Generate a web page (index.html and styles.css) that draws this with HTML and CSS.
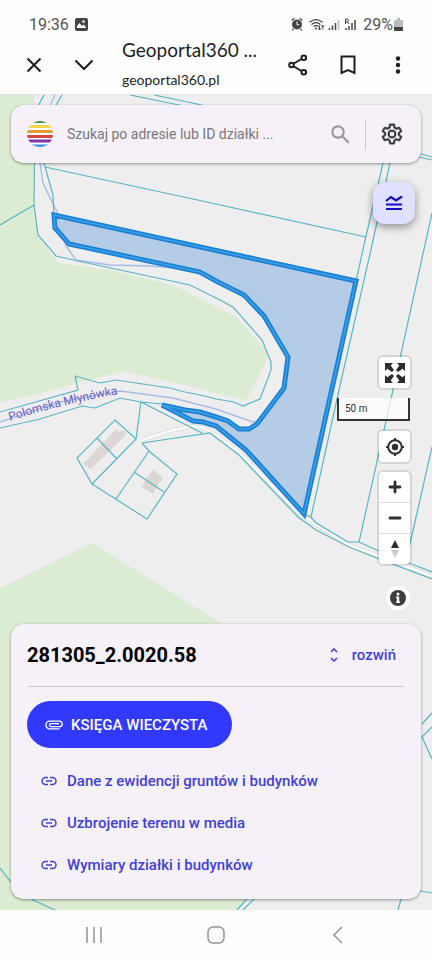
FILE: index.html
```html
<!DOCTYPE html>
<html lang="pl">
<head>
<meta charset="utf-8">
<meta name="viewport" content="width=device-width, initial-scale=1">
<title>Geoportal360</title>
<link rel="stylesheet" href="styles.css">
</head>
<body>
<header class="top">
  <div class="status">
    <span class="clock">19:36</span>
    <svg class="pic" width="13" height="13" viewBox="0 0 13 13"><rect width="13" height="13" rx="2" fill="#444"/><path d="M2 10V8l2.500-3 2.500 3 1.500-1.500L11 9v1z" fill="#fff"/><circle cx="8.500" cy="3.500" r="1.200" fill="#fff"/></svg>
    <svg class="signals" width="67" height="16" viewBox="0 0 67 16" fill="none" stroke="#444">
      <circle cx="6" cy="8.500" r="5" fill="#444" stroke="none"/><path d="M.7 4.500 3.300 2.300M11.300 4.500 8.700 2.300M2.500 13 1.300 14.300M9.500 13l1.200 1.300" stroke-width="1.400"/><path d="M6 5.500v3.300h2.500" stroke="#fff"/>
      <path d="M18.500 6.200q6.500-5 13 0M20.500 8.400q4.500-3.600 9 0M22.500 10.600q2.500-2 5 0" stroke-width="1.300"/><circle cx="25" cy="12.500" r="1" fill="#444" stroke="none"/><path d="M28.500 9.500v4.300m-1.500-1.500 1.500 1.700 1.400-1.700M31.800 13.500V9.200m-1.300 1.500 1.300-1.500 1.300 1.500"/>
      <path d="M38.500 12v2M41.500 9.500V14M44.500 7v7" stroke-width="1.500"/><path d="M47.500 4v10" stroke="#bbb" stroke-width="1.500"/>
      <path d="M54.500 8V3h2.200q1.500 1.300 0 2.700h-2M56 5.700 58 8"/><path d="M55 12v2M58 10v4M61 7v7M64 4v10" stroke-width="1.500"/>
    </svg>
    <span class="percent">29%</span>
    <svg width="9" height="13" viewBox="0 0 9 13"><path d="M3 0h3v2h2q1 0 1 1v9q0 1-1 1H1q-1 0-1-1V3q0-1 1-1h2z" fill="#bbb"/><path d="M0 9h9v3q0 1-1 1H1q-1 0-1-1z" fill="#444"/></svg>
  </div>
  <div class="appbar">
    <button class="bar-btn" aria-label="Zamknij"><svg width="16" height="16" viewBox="0 0 16 16"><path d="M1.500 1.500l13 13M14.500 1.500l-13 13"/></svg></button>
    <button class="bar-btn" aria-label="Zwiń"><svg width="20" height="12" viewBox="0 0 20 12"><path d="M1.500 1.500 10 10l8.500-8.500"/></svg></button>
    <div class="page"><h1>Geoportal360 ...</h1><p>geoportal360.pl</p></div>
    <button class="bar-btn" aria-label="Udostępnij"><svg width="20" height="22" viewBox="0 0 20 22"><path d="M5 10 13.500 5M5 12l8.500 5"/><circle cx="3.500" cy="11" r="2.300"/><circle cx="15.800" cy="3.700" r="2.300"/><circle cx="15.800" cy="18.300" r="2.300"/></svg></button>
    <button class="bar-btn" aria-label="Zapisz"><svg width="16" height="20" viewBox="0 0 16 20"><path d="M1.500 1.500h13v16.500L8 15.200 1.500 18z"/></svg></button>
    <button class="bar-btn" aria-label="Menu"><svg width="6" height="18" viewBox="0 0 6 18"><g fill="#1d1d1f" stroke="none"><circle cx="3" cy="2.500" r="2.200"/><circle cx="3" cy="9" r="2.200"/><circle cx="3" cy="15.500" r="2.200"/></g></svg></button>
  </div>
</header>

<main class="map-view">
  <svg class="map" viewBox="0 95 432 815" preserveAspectRatio="xMidYMin slice" role="img" aria-label="Mapa działek">
    <rect y="95" width="432" height="815" fill="#eee"/>
    <g fill="#dbecd3">
      <path d="M0 95H34L33 205 39 238 58 263 110 270 173 285 216 307 236 317 266 350 268 357 253 388 246 400 216 393 180 384 123 371 33 395 0 402z"/>
      <path d="M0 588 92 543 222 624 262 800 262 885 236 910H0z"/>
    </g>
    <g fill="#dcd7d5"><path d="M83 464 116 429 119 432 123 430 127 434 91 469z"/><path d="M153 470 163 477 158 485 153 494 142 487 147 477z"/></g>
    <g fill="none" stroke-linejoin="round">
      <path d="M142 440 170 431 192 426 204 428 216 435 240 453 301 515 349 545 379 556 432 576" stroke="#d2cfce" stroke-width="4"/>
      <path d="M142 440 170 431 192 426 204 428 216 435 240 453 301 515 349 545 379 556 432 576" stroke="#fafafa" stroke-width="3"/>
      <path d="M55 95 43 120 40 163 43 183 57 212 66 246 76 260 110 265 150 266 200 270 244 287 268 308 290 350 285 392 264 420 253 422 216 409 173 398 120 391 60 402 0 422" stroke="#a8bce6" stroke-width="1.400"/>
    </g>
    <path d="M54 215 356 281 304 514 246 450 216 426 203 422 193 421 162 406 185 410 200 412 216 417 228 421 239 429 249 429 257 424 284 388 288 357 264 316 244 295 216 281 200 272 69 244 55 228z" fill="#b0cae6" fill-opacity=".94"/>
    <g fill="none" stroke="#59b5c3" stroke-width="1.200">
      <path d="M44 95 35 112 34 205 38 235 56 256 78 261 190 285 216 298 233 307 262 340 271 362 271 370 260 399 243 406 234 402 216 399 205 396 185 392 170 388 116 380 100 383 75 376 78 390 0 412"/>
      <path d="M62 95 52 112 44 163 53 195 54 215M0 225 34 205M45 167 216 204 366 237M130 95 174 104 421 154 432 157M154 95 197 104 419 157 432 160"/>
      <path d="M383 163 364 245 356 281M390 163 372 245 339 390 311 517M432 213 393 390 359 542M432 447 409 548"/>
      <path d="M0 428 40 419 82 406 95 408 120 398 141 402 162 404M202 433 141 402 136 439M142 443 210 433 239 455 298 517 316 530 349 547 379 559 432 579M304 514 311 517 316 523 348 542 359 542 379 551 409 563 432 572"/>
      <path d="M115 420 136 439 92 484 77 458zM97 438 117 459M142 443 149 451 177 474 147 519 92 484M149 451 116 499M134 472 164 492"/>
      <path d="M0 868 10 881 33 900 55 910M237 910 247 899M243 910 254 899M422 724 432 713M432 727 422 737 432 759M420 891 432 893M401 899 398 910"/>
    </g>
    <g fill="none">
      <path id="parcel" d="M54 215 356 281 304 514 246 450 216 426 203 422 193 421 162 405 185 410 200 412 216 417 228 421 239 429 249 429 257 424 284 388 288 357 264 316 244 295 216 281 200 272 69 244 55 228z" stroke="#1b80d5" stroke-width="5"/>
      <path d="M54 215 356 281 304 514 246 450 216 426 203 422 193 421 162 405 185 410 200 412 216 417 228 421 239 429 249 429 257 424 284 388 288 357 264 316 244 295 216 281 200 272 69 244 55 228z" stroke="#3ba2e6" stroke-width="1.500"/>
    </g>
    <path id="river" d="M10 421Q62 404 120 394" fill="none"/>
    <text class="river-name"><textPath href="#river">Połomska Młynówka</textPath></text>
  </svg>

  <form class="search">
    <svg width="26" height="26" viewBox="0 0 26 26" aria-hidden="true">
      <clipPath id="disc"><circle cx="13" cy="13" r="13"/></clipPath>
      <g clip-path="url(#disc)"><path fill="#fff" d="M0 0h26v26H0z"/><path fill="#469447" d="M0 0h26v2H0z"/><path fill="#f6d64a" d="M0 4h26v3H0z"/><path fill="#e79a30" d="M0 9h26v3H0z"/><path fill="#d6463f" d="M0 14h26v3H0z"/><path fill="#8134a8" d="M0 18.500h26v3H0z"/><path fill="#3a8de0" d="M0 23.500h26V26H0z"/></g>
    </svg>
    <input type="text" aria-label="Szukaj" placeholder="Szukaj po adresie lub ID działki ...">
    <button type="button" aria-label="Szukaj"><svg width="19" height="19" viewBox="0 0 19 19" fill="none" stroke="#9b979c" stroke-width="2.200"><circle cx="7" cy="7" r="5.700"/><path d="m11.300 11.300 6.500 6.500"/></svg></button>
    <span class="rule"></span>
    <button type="button" aria-label="Ustawienia"><svg width="22" height="22" viewBox="0 0 24 24" fill="none" stroke="#414046" stroke-width="2.400" stroke-linejoin="round"><path d="M9.900 1.800h4.200l.6 3.100 2.200 1.300 3-1 2.100 3.600-2.400 2.100v2.200l2.400 2.100-2.100 3.600-3-1-2.200 1.300-.6 3.100H9.900l-.6-3.100-2.200-1.300-3 1L2 15.200l2.400-2.100v-2.200L2 8.800l2.100-3.600 3 1 2.200-1.300z"/><circle cx="12" cy="12" r="3.700"/></svg></button>
  </form>

  <button class="layers" aria-label="Warstwy"><svg width="18" height="16" viewBox="0 0 18 16" fill="none" stroke="#1509cf" stroke-width="2.200"><path d="M1 6 6 2l5 3.500L17 1.500M1 9.500h16M1 14h16"/></svg></button>

  <div class="controls">
    <button class="ctl" aria-label="Pełny ekran"><svg width="20" height="20" viewBox="0 0 20 20" fill="#2d2d2d"><path id="arrow" d="M0 0h8L5.700 2.400 9 7 7 9 2.400 5.700 0 8z"/><use href="#arrow" transform="matrix(-1 0 0 1 20 0)"/><use href="#arrow" transform="matrix(1 0 0 -1 0 20)"/><use href="#arrow" transform="matrix(-1 0 0 -1 20 20)"/></svg></button>
    <div class="scale">50 m</div>
    <button class="ctl" aria-label="Moja lokalizacja"><svg width="20" height="20" viewBox="0 0 20 20" fill="none" stroke="#2d2d2d" stroke-width="2"><circle cx="10" cy="10" r="6.800"/><circle cx="10" cy="10" r="3.200" fill="#2d2d2d" stroke="none"/><path d="M10 1v3M10 16v3M1 10h3M16 10h3"/></svg></button>
    <div class="zoom">
      <button aria-label="Przybliż"><svg width="14" height="14" viewBox="0 0 14 14"><path d="M2 7h10M7 2v10" stroke="#2d2d2d" stroke-width="2.800" stroke-linecap="round"/></svg></button>
      <button aria-label="Oddal"><svg width="14" height="14" viewBox="0 0 14 14"><path d="M2 7h10" stroke="#2d2d2d" stroke-width="2.800" stroke-linecap="round"/></svg></button>
      <button aria-label="Północ"><svg width="10" height="20" viewBox="0 0 10 20"><path d="m5 1 4 8H1z" fill="#2d2d2d"/><path d="m5 19 4-8H1z" fill="#ccc"/></svg></button>
    </div>
    <button class="info" aria-label="Informacje"><svg width="16" height="16" viewBox="0 0 16 16"><circle cx="8" cy="8" r="8" fill="#3d3d3d"/><circle cx="8" cy="4" r="1.500" fill="#fff"/><path d="M6 6.500h3.200v5H10V13H6v-1.500h.800V8H6z" fill="#fff"/></svg></button>
  </div>

  <section class="panel">
    <div class="panel-head">
      <h2>281305_2.0020.58</h2>
      <button class="expand"><svg width="8" height="14" viewBox="0 0 8 14" fill="none" stroke="#4340d6" stroke-width="1.600"><path d="M1 4l3-3 3 3M1 10l3 3 3-3"/></svg>rozwiń</button>
    </div>
    <button class="primary"><svg width="18" height="10" viewBox="0 0 18 10" fill="none" stroke="#fff" stroke-width="1.300"><path d="M14.500 8.800H4.700A3.800 3.800 0 0 1 4.700 1.200H14.500a2.700 2.700 0 0 1 0 5.400H6a1.500 1.500 0 0 1 0-3h8"/></svg>KSIĘGA WIECZYSTA</button>
    <nav class="links">
      <a href="#ewidencja"><svg width="16" height="10" viewBox="0 0 16 10"><path d="M7 1.500H4.500a3.500 3.500 0 0 0 0 7H7M9 1.500h2.500a3.500 3.500 0 0 1 0 7H9M5 5h6"/></svg>Dane z ewidencji gruntów i budynków</a>
      <a href="#uzbrojenie"><svg width="16" height="10" viewBox="0 0 16 10"><path d="M7 1.500H4.500a3.500 3.500 0 0 0 0 7H7M9 1.500h2.500a3.500 3.500 0 0 1 0 7H9M5 5h6"/></svg>Uzbrojenie terenu w media</a>
      <a href="#wymiary"><svg width="16" height="10" viewBox="0 0 16 10"><path d="M7 1.500H4.500a3.500 3.500 0 0 0 0 7H7M9 1.500h2.500a3.500 3.500 0 0 1 0 7H9M5 5h6"/></svg>Wymiary działki i budynków</a>
    </nav>
  </section>
</main>

<footer class="system">
  <button aria-label="Ostatnie"><svg width="18" height="16" viewBox="0 0 18 16"><path d="M2 0v16M9 0v16M16 0v16"/></svg></button>
  <button aria-label="Ekran główny"><svg width="18" height="18" viewBox="0 0 18 18"><rect x="1" y="1" width="16" height="16" rx="5"/></svg></button>
  <button aria-label="Wstecz"><svg width="12" height="18" viewBox="0 0 12 18"><path d="M10 1 2 9l8 8"/></svg></button>
</footer>
</body>
</html>
```
FILE: styles.css
```css
* { box-sizing: border-box; }

body {
  margin: 0;
  min-height: 100vh;
  display: flex;
  flex-direction: column;
  background: #fefefe;
  color: #1d1d1f;
  font-family: Roboto, "Noto Sans", sans-serif;
}

button {
  margin: 0;
  padding: 0;
  border: 0;
  background: none;
  color: inherit;
  font: inherit;
  display: flex;
  align-items: center;
  justify-content: center;
}

svg { flex: none; display: block; }
h1, h2, p { margin: 0; font-weight: 400; }

.top { padding-top: 12px; border-bottom: 1px solid #dfe2e6; }

.status {
  height: 24px;
  padding: 0 29px;
  display: flex;
  align-items: center;
  color: #555;
  font-size: 16px;
}
.pic { margin-left: 6px; }
.signals { margin-left: auto; margin-right: 5px; }
.percent { margin-right: 1px; }

.appbar {
  height: 58px;
  padding: 0 9px;
  display: flex;
  align-items: center;
}
.bar-btn { width: 50px; height: 50px; }
.bar-btn svg { fill: none; stroke: #1d1d1f; stroke-width: 2; }
.page { flex: 1; min-width: 0; padding-left: 13px; white-space: nowrap; }
.page h1 { font-family: Lato, sans-serif; font-size: 19px; line-height: 30px; }
.page p { font-family: Lato, sans-serif; font-size: 14px; line-height: 30px; }

.map-view {
  flex: 1;
  position: relative;
  z-index: 0;
  padding: 10px 11px 11px;
  display: flex;
  flex-direction: column;
}
.map {
  position: absolute;
  inset: 0;
  width: 100%;
  height: 100%;
  z-index: -1;
}
.river-name { font-size: 12px; fill: #6a62c6; }

.search {
  height: 58px;
  padding: 0 18px 0 16px;
  display: flex;
  align-items: center;
  border-radius: 13px;
  background: #f6f1f8;
  box-shadow: 0 1px 3px rgba(0, 0, 0, .4);
}
.search input {
  flex: 1;
  min-width: 0;
  margin-left: 14px;
  padding: 0;
  border: 0;
  outline: 0;
  background: none;
  font: 14px Roboto, sans-serif;
}
.search input::placeholder { color: #79767c; opacity: 1; }
.rule { width: 1px; height: 31px; margin: 0 15px; background: #cbc6cd; }

.layers {
  width: 42px;
  height: 42px;
  margin: 19px 6px 0 auto;
  border-radius: 12px;
  background: #e0e0ff;
  box-shadow: 0 3px 8px rgba(0, 0, 0, .4);
}

.controls {
  margin: auto 11px 14px auto;
  display: flex;
  flex-direction: column;
  align-items: flex-end;
  gap: 10px;
}
.ctl, .zoom {
  width: 31px;
  border-radius: 4px;
  background: #fff;
  box-shadow: 0 0 0 2px rgba(0, 0, 0, .1);
}
.ctl { height: 31px; }
.zoom { overflow: hidden; }
.zoom button { width: 31px; height: 30px; }
.zoom button + button { height: 31px; border-top: 1px solid #ddd; }
.scale {
  width: 73px;
  height: 23px;
  padding-left: 6px;
  border: 2px solid #333;
  border-top: 0;
  background: rgba(255, 255, 255, .75);
  color: #333;
  font-size: 10px;
  line-height: 21px;
}
.info {
  width: 24px;
  height: 24px;
  margin-top: 12px;
  border-radius: 12px;
  background: #fff;
}

.panel {
  padding: 0 16px 13px;
  border-radius: 13px;
  background: #f6f1f8;
  box-shadow: 0 1px 3px rgba(0, 0, 0, .4);
}
.panel-head {
  height: 63px;
  display: flex;
  align-items: center;
  justify-content: space-between;
  border-bottom: 1px solid #cbc6cd;
}
.panel-head h2 { color: #000; font-size: 20px; font-weight: 700; }
.expand { gap: 14px; margin-right: 9px; }
.expand, .links a { color: #4340d6; font-size: 15px; font-weight: 500; }
.primary {
  height: 47px;
  margin: 14px 0 12px;
  padding: 0 25px 0 18px;
  gap: 8px;
  border-radius: 24px;
  background: #313afc;
  color: #fff;
  font-size: 15px;
  font-weight: 500;
}
.links a {
  height: 42px;
  padding-left: 14px;
  display: flex;
  align-items: center;
  gap: 10px;
  text-decoration: none;
}
.links svg { fill: none; stroke: #4340d6; stroke-width: 1.5; }

.system {
  height: 50px;
  padding: 0 33px;
  display: flex;
  align-items: center;
  justify-content: space-between;
}
.system button { width: 122px; height: 48px; }
.system svg { fill: none; stroke: #929292; stroke-width: 1.5; }
```
